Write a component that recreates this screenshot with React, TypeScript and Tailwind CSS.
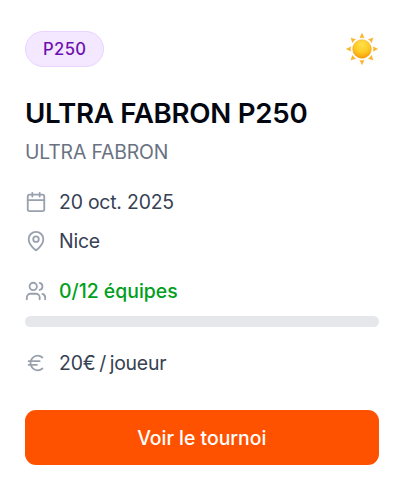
import { ReactNode } from "react";
import { Calendar, Euro, MapPin, Users } from "lucide-react";

interface InfoRowProps {
  icon: ReactNode;
  children: ReactNode;
}

function InfoRow({ icon, children }: InfoRowProps) {
  return (
    <div className="flex h-7 items-center gap-3 text-[19.4px] text-[#364153]">
      <span className="text-[#99a1af]">{icon}</span>
      <span className="pt-[2px] tracking-[-0.2px]">{children}</span>
    </div>
  );
}

const rayAngles = [0, 45, 90, 135, 180, 225, 270, 315];

function SunIcon() {
  return (
    <svg width="34" height="34" viewBox="0 0 34 34">
      <defs>
        <radialGradient id="sun-disc" cx="0.5" cy="0.28" r="0.72">
          <stop offset="0" stopColor="#ffe04a" />
          <stop offset="0.55" stopColor="#ffcb24" />
          <stop offset="1" stopColor="#f59b08" />
        </radialGradient>
      </defs>
      {rayAngles.map((angle) => (
        <path
          key={angle}
          d="M17 1.3 L19.2 5.8 Q17 5 14.8 5.8 Z"
          fill="#f9b42c"
          stroke="#f9b42c"
          strokeWidth="0.4"
          strokeLinejoin="round"
          transform={`rotate(${angle} 17 17)`}
        />
      ))}
      <circle cx="17" cy="17" r="9.3" fill="url(#sun-disc)" stroke="#f3a51c" strokeWidth="0.5" />
    </svg>
  );
}

interface TournamentCardProps {
  category: string;
  title: string;
  club: string;
  date: string;
  city: string;
  teams: number;
  maxTeams: number;
  price: string;
}

function TournamentCard({ category, title, club, date, city, teams, maxTeams, price }: TournamentCardProps) {
  return (
    <div className="flex h-[495px] w-[407px] flex-col bg-white pt-[30.5px] pr-[28.5px] pl-[25px] font-['Inter',sans-serif]">
      <div className="flex h-9 items-center justify-between">
        <span className="flex h-9 items-center rounded-full border border-[#e9d4ff] bg-[#f3e8ff] px-[17px] pt-[2px] text-[16.6px] font-medium tracking-[0.4px] text-[#6e11b0]">
          {category}
        </span>
        <SunIcon />
      </div>
      <h3 className="mt-[27px] text-[27.7px] leading-[39px] font-semibold tracking-[-0.28px] whitespace-nowrap text-[#030712]">
        {title}
      </h3>
      <p className="mt-[5px] text-[19.4px] leading-7 tracking-[-0.15px] text-[#6a7282]">{club}</p>
      <div className="mt-[22px] flex flex-col gap-[11px]">
        <InfoRow icon={<Calendar size={22} />}>{date}</InfoRow>
        <InfoRow icon={<MapPin size={22} />}>{city}</InfoRow>
      </div>
      <div className="mt-[22px] flex flex-col gap-[11px]">
        <InfoRow icon={<Users size={22} />}>
          <span className="font-medium tracking-normal text-[#00a01d]">
            {teams}/{maxTeams} équipes
          </span>
        </InfoRow>
        <div className="h-[11px] overflow-hidden rounded-full bg-[#e5e7eb]">
          <div className="h-full bg-[#00a63e]" style={{ width: `${(teams / maxTeams) * 100}%` }} />
        </div>
      </div>
      <div className="mt-[22px]">
        <InfoRow icon={<Euro size={22} />}>
          <span className="[word-spacing:-1.5px]">{price} / joueur</span>
        </InfoRow>
      </div>
      <button className="mt-[33.5px] h-[55px] w-full shrink-0 rounded-[11px] bg-[#ff5200] pt-[2px] text-[19.4px] font-medium text-white">
        Voir le tournoi
      </button>
    </div>
  );
}

export default function App() {
  return (
    <TournamentCard
      category="P250"
      title="ULTRA FABRON P250"
      club="ULTRA FABRON"
      date="20 oct. 2025"
      city="Nice"
      teams={0}
      maxTeams={12}
      price="20€"
    />
  );
}
